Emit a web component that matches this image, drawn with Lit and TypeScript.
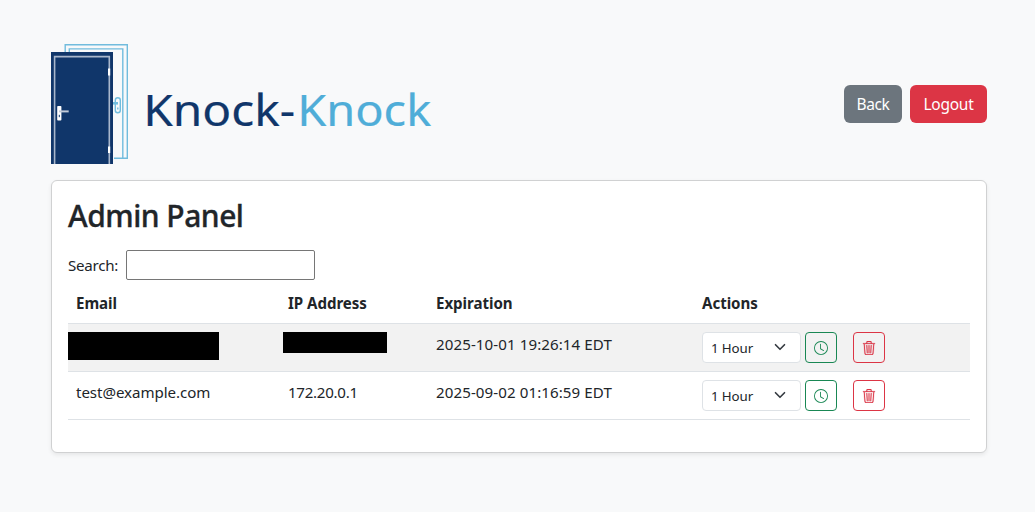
import { LitElement, html, css, svg } from "lit";
import { customElement } from "lit/decorators.js";

interface Entry {
  email: string;
  ip: string;
  expires: string;
}

const entries: Entry[] = [
  { email: "", ip: "", expires: "2025-10-01 19:26:14 EDT" },
  { email: "test@example.com", ip: "172.20.0.1", expires: "2025-09-02 01:16:59 EDT" },
];

const clock = svg`
  <path d="M8 3.5a.5.5 0 0 0-1 0V9a.5.5 0 0 0 .252.434l3.5 2a.5.5 0 0 0 .496-.868L8 8.71z"/>
  <path d="M8 16A8 8 0 1 0 8 0a8 8 0 0 0 0 16m7-8A7 7 0 1 1 1 8a7 7 0 0 1 14 0"/>`;

const trash = svg`
  <path stroke="currentColor" stroke-width=".25" d="M6.5 1h3a.5.5 0 0 1 .5.5v1H6v-1a.5.5 0 0 1 .5-.5M11 2.5v-1A1.5 1.5 0 0 0 9.5 0h-3A1.5 1.5 0 0 0 5 1.5v1H1.5a.5.5 0 0 0 0 1h.538l.853 10.66A2 2 0 0 0 4.885 16h6.23a2 2 0 0 0 1.994-1.84l.853-10.66h.538a.5.5 0 0 0 0-1zm1.958 1-.846 10.58a1 1 0 0 1-.997.92h-6.23a1 1 0 0 1-.997-.92L3.042 3.5zm-7.487 1a.5.5 0 0 1 .528.47l.5 8.5a.5.5 0 0 1-.998.06L5 5.03a.5.5 0 0 1 .47-.53Zm5.058 0a.5.5 0 0 1 .47.53l-.5 8.5a.5.5 0 1 1-.998-.06l.5-8.5a.5.5 0 0 1 .528-.47M8 4.5a.5.5 0 0 1 .5.5v8.5a.5.5 0 0 1-1 0V5a.5.5 0 0 1 .5-.5"/>`;

@customElement("knock-logo")
export class KnockLogo extends LitElement {
  static styles = css`
    :host { display: block; }
    .logo { display: block; }
    .word { font-family: "Noto Sans", sans-serif; font-size: 44.5px; stroke-width: 0.2px; }
  `;

  render() {
    return html`<svg class="logo" width="384" height="120" viewBox="0 0 384 120">
      <g fill="none" stroke="#71bcdd" stroke-width="1.4">
        <path d="M14.2 8V.7H76.3V114.3H63" />
        <path d="M18.3 8V4.9H71.8V114" />
        <rect x="64.3" y="53.8" width="5" height="15" rx="2.5" />
        <path d="M62 59.3h5" stroke-width="2.6" />
        <path d="M66.8 63.5v2" />
      </g>
      <rect x="0" y="8" width="62" height="112" fill="#10366a" />
      <path d="M3.6 120V12.6H58.3V120" fill="none" stroke="#a9b7cc" stroke-width="1.6" />
      <path d="M57 24.5h2.2v7H57zM57 102.5h2.2v6.5H57z" fill="#fff" />
      <rect x="6.2" y="62" width="4.2" height="14.5" rx=".8" fill="#fff" />
      <path d="M8 67.4h9.7" stroke="#c3ccd9" stroke-width="2" />
      <path d="M8.3 70.8v2.4" stroke="#10366a" stroke-width="1" />
      <text class="word" x="92.2" y="82" fill="#10366a" stroke="#10366a" textLength="152" lengthAdjust="spacingAndGlyphs">Knock-</text>
      <text class="word" x="246.2" y="82" fill="#4fadd8" stroke="#4fadd8" textLength="134" lengthAdjust="spacingAndGlyphs">Knock</text>
    </svg>`;
  }
}

@customElement("app-root")
export class AppRoot extends LitElement {
  static styles = css`
    :host {
      display: block;
      box-sizing: border-box;
      min-height: 512px;
      padding: 44px 48px 0 51px;
      background: #f8f9fa;
      color: #212529;
      font: 15.1px/24px "Noto Sans", sans-serif;
    }
    * { box-sizing: border-box; }
    .header { display: flex; align-items: center; justify-content: space-between; height: 120px; margin-bottom: 16px; }
    .buttons { display: flex; gap: 8px; }
    .btn {
      height: 38px; padding: 0; border: 0; border-radius: 6px; color: #fff;
      font: 15.5px/24px "Noto Sans", sans-serif;
    }
    .back { width: 58px; background: #6c757d; letter-spacing: -0.35px; }
    .logout { width: 77px; background: #dc3545; letter-spacing: -0.25px; }
    .card {
      height: 273px; padding: 16px; border: 1px solid #d0d1d2; border-radius: 6px;
      background: #fff; box-shadow: 0 2px 4px rgba(0, 0, 0, 0.075);
    }
    .title {
      margin: 0 0 15px; font-size: 30px; line-height: 38px; font-weight: 500; letter-spacing: -0.5px;
      -webkit-text-stroke: 0.35px #212529;
    }
    .search { display: flex; align-items: center; gap: 8px; height: 30px; margin-bottom: 3px; }
    .label { width: 50px; white-space: nowrap; letter-spacing: -0.25px; }
    .field { width: 189px; height: 30px; border: 1px solid #767676; border-radius: 2px; background: #fff; }
    .row {
      display: grid; grid-template-columns: 212px 148px 266px 276px;
      height: 48px; border-bottom: 1px solid #dee2e6;
    }
    .head { height: 41px; font-weight: 700; letter-spacing: -0.05px; }
    .striped { background: #f2f2f2; }
    .cell { padding: 8px; white-space: nowrap; }
    .email { letter-spacing: -0.06px; }
    .ip { letter-spacing: -0.28px; }
    .expires { letter-spacing: 0.09px; }
    .hidden-email { width: 151px; height: 28px; margin-top: 8px; background: #000; }
    .hidden-ip { width: 104px; height: 21px; margin: 8px 0 0 3px; background: #000; }
    .actions { display: flex; align-items: flex-start; }
    .select {
      display: flex; align-items: center; justify-content: space-between;
      width: 99px; height: 31px; padding: 1px 14px 0 8px; border: 1px solid #dee2e6; border-radius: 4px;
      background: #fff; font-size: 13.3px; letter-spacing: -0.1px;
    }
    .chevron { display: block; margin-top: -3px; }
    .tool {
      display: flex; align-items: center; justify-content: center;
      width: 32px; height: 31px; padding: 0; border: 1px solid; border-radius: 4px; background: none;
    }
    .extend { margin: 0 16px 0 4px; color: #198754; }
    .remove { color: #dc3545; }
  `;

  private icon(shape: unknown, size: number) {
    return html`<svg width=${size} height=${size} viewBox="0 0 16 16" fill="currentColor">${shape}</svg>`;
  }

  private row(e: Entry, i: number) {
    return html`<div class="row ${i % 2 ? "" : "striped"}">
      ${e.email ? html`<div class="cell email">${e.email}</div>` : html`<div class="hidden-email"></div>`}
      ${e.ip ? html`<div class="cell ip">${e.ip}</div>` : html`<div class="hidden-ip"></div>`}
      <div class="cell expires">${e.expires}</div>
      <div class="cell actions">
        <div class="select">1 Hour
          <svg class="chevron" width="12" height="12" viewBox="0 0 16 16" fill="none" stroke="#343a40" stroke-width="2.2" stroke-linecap="round" stroke-linejoin="round"><path d="m2 5 6 6 6-6" /></svg>
        </div>
        <button class="tool extend" aria-label="Extend">${this.icon(clock, 14)}</button>
        <button class="tool remove" aria-label="Delete">${this.icon(trash, 14)}</button>
      </div>
    </div>`;
  }

  render() {
    return html`
      <div class="header">
        <knock-logo></knock-logo>
        <div class="buttons">
          <button class="btn back">Back</button>
          <button class="btn logout">Logout</button>
        </div>
      </div>
      <div class="card">
        <h2 class="title">Admin Panel</h2>
        <div class="search"><span class="label">Search:</span><input class="field" aria-label="Search" /></div>
        <div class="row head">
          <div class="cell">Email</div>
          <div class="cell">IP Address</div>
          <div class="cell">Expiration</div>
          <div class="cell">Actions</div>
        </div>
        ${entries.map((e, i) => this.row(e, i))}
      </div>
    `;
  }
}
